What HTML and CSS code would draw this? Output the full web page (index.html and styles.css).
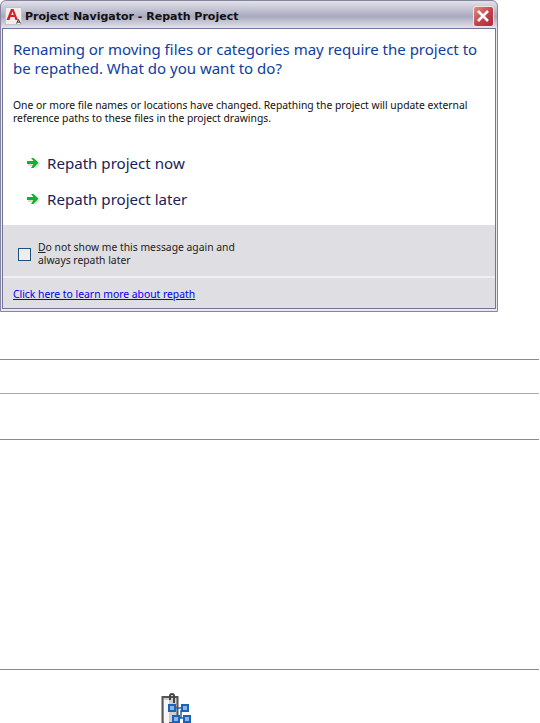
FILE: index.html
```html
<!DOCTYPE html>
<html lang="en">
<head>
  <meta charset="UTF-8">
  <title>Project Navigator - Repath Project</title>
  <link rel="stylesheet" href="styles.css">
</head>
<body>
  <!-- Dialog -->
  <div class="dialog">
    <div class="titlebar">
      <svg class="app-icon" width="17" height="18" viewBox="0 0 17 18">
        <rect x="0.5" y="0.5" width="16" height="17" fill="#f1efe9" stroke="#c4c4cc"/>
        <path d="M1.5 13 L6 2 L8.5 2 L13 13 L10.4 13 L9.5 10 L5.5 10 L4.5 13 Z M6.3 8 L8.7 8 L7.4 4.6 Z" fill="#d8202c" fill-rule="evenodd"/>
        <path d="M11.5 16.5 L13.5 12.5 L15.5 16.5 M12.3 15.2 L14.7 15.2" fill="none" stroke="#333" stroke-width="1"/>
      </svg>
      <span class="title-text">Project Navigator - Repath Project</span>
      <div class="close-btn">
        <svg width="21" height="21" viewBox="0 0 21 21">
          <path d="M5 5 L15 15 M15 5 L5 15" stroke="#fff" stroke-width="2.6" fill="none"/>
        </svg>
      </div>
    </div>

    <div class="content">
      <div class="main-part">
        <h1 class="heading">Renaming or moving files or categories may require the project to be repathed. What do you want to do?</h1>
        <p class="desc">One or more file names or locations have changed. Repathing the project will update external reference paths to these files in the project drawings.</p>

        <div class="option">
          <svg class="arrow" width="15" height="15" viewBox="0 0 15 15">
            <path d="M2 7 H9 V4 L14 8 L9 13 V10 H2 Z" fill="#dcdcdc"/>
            <path d="M1 5 H7.5 L5 2 H7.5 L12.5 6.5 L7.5 12 H5 L7.5 8 H1 Z" fill="#12b02c"/>
          </svg>
          <span>Repath project now</span>
        </div>
        <div class="option">
          <svg class="arrow" width="15" height="15" viewBox="0 0 15 15">
            <path d="M2 7 H9 V4 L14 8 L9 13 V10 H2 Z" fill="#dcdcdc"/>
            <path d="M1 5 H7.5 L5 2 H7.5 L12.5 6.5 L7.5 12 H5 L7.5 8 H1 Z" fill="#12b02c"/>
          </svg>
          <span>Repath project later</span>
        </div>
      </div>

      <div class="check-part">
        <span class="checkbox"></span>
        <span class="check-label"><u>D</u>o not show me this message again and<br>always repath later</span>
      </div>

      <div class="link-part">
        <a href="#" class="learn-link">Click here to learn more about repath</a>
      </div>
    </div>
  </div>

  <!-- Rules below the dialog -->
  <div class="rule rule-1"></div>
  <div class="rule rule-2"></div>
  <div class="rule rule-3"></div>
  <div class="rule rule-4"></div>

  <svg class="nav-icon" width="30" height="30" viewBox="0 0 30 30">
    <rect x="1.5" y="4" width="15" height="26" fill="#cfcfcf" stroke="#555" stroke-width="2"/>
    <rect x="3" y="7" width="5" height="23" fill="#f6f6f6"/>
    <path d="M9 7 V3 Q9 1 11 1 Q13 1 13 3 V10" fill="none" stroke="#444" stroke-width="2"/>
    <path d="M12 15 H24 M20 17 V25 M15 25 H26" stroke="#1a63b8" stroke-width="1.5" fill="none"/>
    <rect x="8" y="12" width="6" height="6" fill="#8fb4e0" stroke="#1a63b8" stroke-width="2"/>
    <rect x="21" y="12" width="6" height="6" fill="#8fb4e0" stroke="#1a63b8" stroke-width="2"/>
    <rect x="12" y="23" width="6" height="6" fill="#8fb4e0" stroke="#1a63b8" stroke-width="2"/>
    <rect x="23" y="23" width="6" height="6" fill="#8fb4e0" stroke="#1a63b8" stroke-width="2"/>
  </svg>
</body>
</html>
```

FILE: styles.css
```css
html,
body {
  height: 723px;
  overflow: hidden;
}

body {
  margin: 0;
  font-family: "Noto Sans", "Liberation Sans", sans-serif;
  background-color: #fff;
  color: #000;
}

.dialog {
  width: 498px;
  height: 312px;
  box-sizing: border-box;
  border: 1px solid #85859f;
  border-radius: 6px 6px 0 0;
  background: linear-gradient(#e2e2ea, #a9a9bf 5%, #e8e8ee 9%);
  display: flex;
  flex-direction: column;
}

.titlebar {
  height: 27px;
  flex: none;
  display: flex;
  align-items: center;
  padding: 3px 3px 0 4px;
  box-sizing: border-box;
}

.app-icon {
  flex: none;
}

.title-text {
  margin-left: 3px;
  font-family: "DejaVu Sans", sans-serif;
  font-size: 11px;
  font-weight: bold;
  color: #111;
}

.close-btn {
  margin-left: auto;
  width: 21px;
  height: 21px;
  border: 1px solid #f4e4e0;
  border-radius: 3px;
  background: linear-gradient(135deg, #dd8f80, #c2404a 55%, #ad2c38);
  box-sizing: border-box;
  display: flex;
  align-items: center;
  justify-content: center;
}

.close-btn svg {
  flex: none;
}

.content {
  flex: 1;
  margin: 0 1px 2px 1px;
  border: 1px solid #74749a;
  background-color: #fff;
  display: flex;
  flex-direction: column;
}

.main-part {
  height: 196px;
  padding: 11px 10px 0 10px;
  box-sizing: border-box;
}

.heading {
  margin: 0;
  font-size: 15px;
  font-weight: normal;
  line-height: 19px;
  color: #0f3da0;
}

.desc {
  margin: 21px 0 0 0;
  font-size: 10.35px;
  line-height: 13px;
  color: #111;
}

.option {
  display: flex;
  align-items: center;
  height: 36px;
  padding-left: 13px;
  font-size: 15.1px;
  color: #1a2258;
}

.option:first-of-type {
  margin-top: 20px;
}

.arrow {
  flex: none;
  margin-right: 6px;
}

.check-part {
  height: 53px;
  flex: none;
  background-color: #dfdfe3;
  display: flex;
  align-items: center;
  padding: 7px 0 0 15px;
  box-sizing: border-box;
  font-size: 10.35px;
  line-height: 13px;
  color: #222;
  border-bottom: 2px solid #f0f0f2;
}

.checkbox {
  flex: none;
  width: 11px;
  height: 11px;
  border: 1px solid #1c5180;
  background-color: #eeeef0;
  margin-right: 7px;
}

.link-part {
  flex: 1;
  background-color: #dfdfe3;
  padding: 9px 10px 0 10px;
  font-size: 10.35px;
}

.learn-link {
  color: #0000ee;
}

.rule {
  width: 539px;
  height: 1px;
  background-color: #8a8a8a;
}

.rule-1 {
  margin-top: 47px;
}

.rule-2 {
  margin-top: 33px;
  background-color: #aaa;
}

.rule-3 {
  margin-top: 45px;
}

.rule-4 {
  margin-top: 229px;
}

.nav-icon {
  display: block;
  margin: 23px 0 0 161px;
}
```
